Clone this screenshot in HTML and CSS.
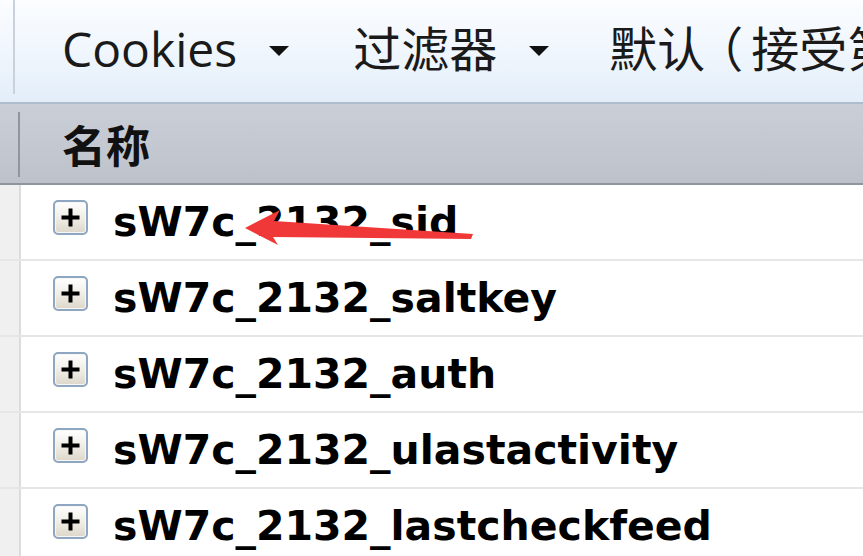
FILE: index.html
```html
<!DOCTYPE html>
<html lang="zh">
<head>
<meta charset="utf-8">
<title>Cookies</title>
<link rel="stylesheet" href="styles.css">
</head>
<body>
<div class="window">
  <div class="toolbar">
    <div class="grip"></div>
    <div class="tb-item tb-cookies">
      <span class="tb-label">Cookies</span>
      <span class="caret"></span>
    </div>
    <div class="tb-item tb-filter">
      <span class="tb-label">过滤器</span>
      <span class="caret"></span>
    </div>
    <div class="tb-item tb-default">
      <span class="tb-label">默认<span class="paren">（</span>接受第一方和第三方</span>
    </div>
  </div>
  <div class="header">
    <div class="hgrip"></div>
    <div class="hcol">名称</div>
  </div>
  <div class="list">
    <div class="row">
      <div class="gutter"></div>
      <div class="cell"><span class="expander"><svg class="plus" viewBox="0 0 19 19" width="19" height="19"><path d="M9.5 0.5v18M0.5 9.5h18" stroke="#000" stroke-width="4" fill="none"/></svg></span><span class="name">sW7c_2132_sid</span></div>
    </div>
    <div class="row">
      <div class="gutter"></div>
      <div class="cell"><span class="expander"><svg class="plus" viewBox="0 0 19 19" width="19" height="19"><path d="M9.5 0.5v18M0.5 9.5h18" stroke="#000" stroke-width="4" fill="none"/></svg></span><span class="name">sW7c_2132_saltkey</span></div>
    </div>
    <div class="row">
      <div class="gutter"></div>
      <div class="cell"><span class="expander"><svg class="plus" viewBox="0 0 19 19" width="19" height="19"><path d="M9.5 0.5v18M0.5 9.5h18" stroke="#000" stroke-width="4" fill="none"/></svg></span><span class="name">sW7c_2132_auth</span></div>
    </div>
    <div class="row">
      <div class="gutter"></div>
      <div class="cell"><span class="expander"><svg class="plus" viewBox="0 0 19 19" width="19" height="19"><path d="M9.5 0.5v18M0.5 9.5h18" stroke="#000" stroke-width="4" fill="none"/></svg></span><span class="name">sW7c_2132_ulastactivity</span></div>
    </div>
    <div class="row">
      <div class="gutter"></div>
      <div class="cell"><span class="expander"><svg class="plus" viewBox="0 0 19 19" width="19" height="19"><path d="M9.5 0.5v18M0.5 9.5h18" stroke="#000" stroke-width="4" fill="none"/></svg></span><span class="name">sW7c_2132_lastcheckfeed</span></div>
    </div>
  </div>
  <svg class="arrow" width="863" height="556" viewBox="0 0 863 556">
    <polygon points="245,228 280,210 274,221 473,234 471,239 273,237 278,245" fill="#f03838"/>
  </svg>
</div>
</body>
</html>
```

FILE: styles.css
```css
html, body {
  margin: 0;
  padding: 0;
  width: 863px;
  height: 556px;
  overflow: hidden;
  background: #ffffff;
}

.window {
  position: relative;
  width: 863px;
  height: 556px;
  display: flex;
  flex-direction: column;
  overflow: hidden;
}

.toolbar {
  flex: 0 0 auto;
  height: 102px;
  display: flex;
  align-items: center;
  background: linear-gradient(to bottom, #fbfdff 0%, #f0f6fd 50%, #e3eef9 100%);
  border-bottom: 2px solid #aebdcd;
  white-space: nowrap;
  overflow: hidden;
  font-family: "Open Sans", "Noto Sans CJK SC", sans-serif;
  font-size: 48px;
  color: #1a1a1a;
}

.grip {
  align-self: stretch;
  width: 13px;
  margin-bottom: 8px;
  border-right: 2px solid #c9d1da;
  flex: 0 0 auto;
}

.tb-item {
  display: flex;
  align-items: center;
  flex: 0 0 auto;
}

.tb-cookies {
  margin-left: 47px;
}

.tb-filter {
  margin-left: 64px;
}

.tb-default {
  margin-left: 60px;
}

.tb-label {
  line-height: 1;
  position: relative;
  top: -2px;
}

.paren {
  font-feature-settings: "halt" 1;
  padding-left: 14px;
  padding-right: 8px;
}

.caret {
  width: 0;
  height: 0;
  margin-left: 32px;
  border-left: 10px solid transparent;
  border-right: 10px solid transparent;
  border-top: 10px solid #111;
}

.header {
  flex: 0 0 auto;
  height: 79px;
  display: flex;
  background: linear-gradient(to bottom, #cacfd7 0%, #c3c8d0 60%, #bdc2ca 100%);
  border-bottom: 2px solid #8e959d;
}

.hgrip {
  width: 18px;
  margin: 8px 0 6px;
  border-right: 2px solid #8f969f;
  flex: 0 0 auto;
}

.hcol {
  display: flex;
  align-items: center;
  padding-left: 42px;
  font-family: "Noto Sans CJK SC", sans-serif;
  font-weight: 700;
  font-size: 44px;
  color: #111;
  line-height: 1;
}

.list {
  flex: 1 1 auto;
  display: flex;
  flex-direction: column;
}

.row {
  flex: 0 0 auto;
  height: 74px;
  display: flex;
  border-bottom: 2px solid #e6e6e6;
}

.gutter {
  width: 19px;
  flex: 0 0 auto;
  background: #f0f0f0;
  border-right: 2px solid #dcdcdc;
}

.cell {
  display: flex;
  align-items: center;
  padding-left: 32px;
  background: #ffffff;
  flex: 1 1 auto;
}

.expander {
  width: 31px;
  height: 31px;
  flex: 0 0 auto;
  border: 2px solid #8ea6c0;
  border-radius: 5px;
  background: linear-gradient(to bottom, #ffffff 0%, #f1eee7 50%, #ddd7c9 100%);
  display: flex;
  align-items: center;
  justify-content: center;
  box-shadow: inset 0 0 0 1px #f7f7f7;
  position: relative;
  top: -5px;
}

.plus {
  display: block;
  flex: none;
}

.name {
  margin-left: 25px;
  font-family: "DejaVu Sans", "Verdana", sans-serif;
  font-weight: 700;
  font-size: 41px;
  color: #000;
  line-height: 1;
  white-space: nowrap;
}

.arrow {
  position: absolute;
  left: 0;
  top: 0;
  pointer-events: none;
}
```
